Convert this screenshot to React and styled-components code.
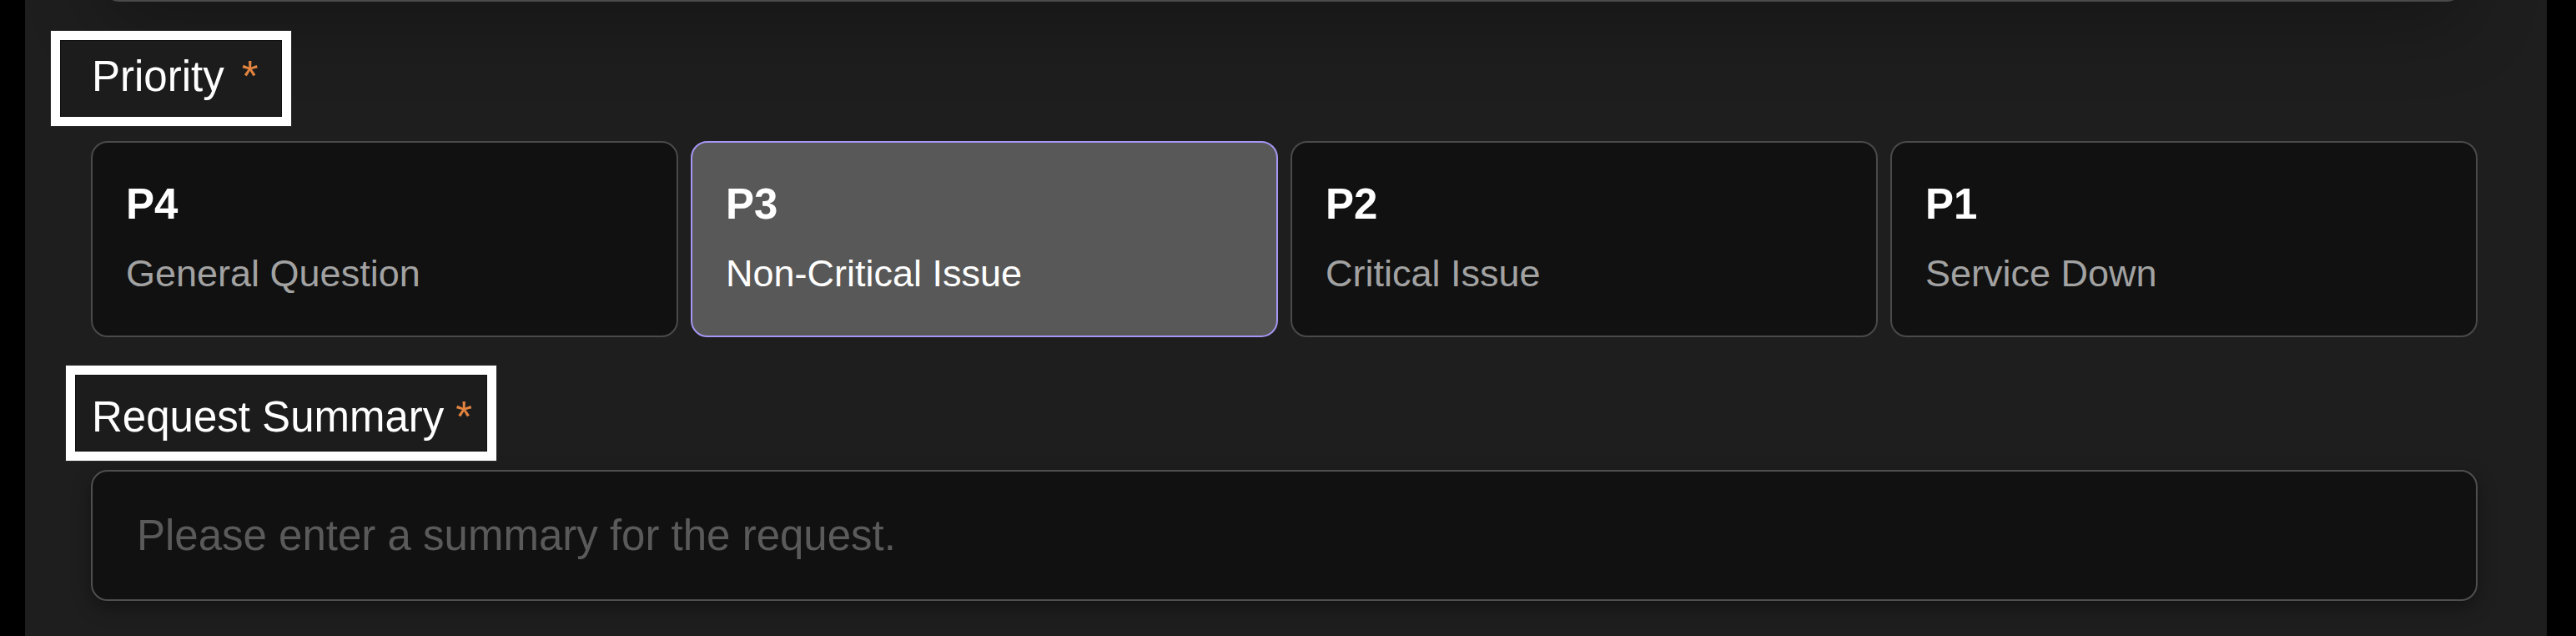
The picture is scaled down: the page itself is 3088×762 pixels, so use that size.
import React from "react";
import styled, { createGlobalStyle } from "styled-components";

const GlobalStyle = createGlobalStyle`
  html, body {
    margin: 0;
    padding: 0;
    background: #000;
  }
  body {
    font-family: "Liberation Sans", Arial, Helvetica, sans-serif;
    -webkit-font-smoothing: antialiased;
  }
  * { box-sizing: border-box; }
`;

const Page = styled.div`
  display: flex;
  height: 762px;
  overflow: hidden;
  background: #000;
  padding: 0 35px 0 30px;
`;

const Panel = styled.section`
  flex: 1;
  display: flex;
  flex-direction: column;
  align-items: flex-start;
  background: #1e1e1e;
  padding: 0 83px 0 31px;
`;

const TopField = styled.div`
  align-self: stretch;
  height: 120px;
  margin: -118px 17px 0 62px;
  background: #111;
  border: 2px solid #4a4a4a;
  border-radius: 20px;
  box-shadow: 0 24px 90px rgba(0, 0, 0, 0.28);
`;

const LabelMark = styled.label`
  display: flex;
  align-items: flex-start;
  margin-top: ${(p) => p.$mt}px;
  margin-left: ${(p) => p.$ml}px;
  padding: ${(p) => p.$pad};
  border: 11px solid #fff;
  background: #1c1c1c;
  box-shadow: inset 0 0 0 1px #101010, 0 0 0 1px #2a2a2a;
  color: #fff;
  font-size: 51px;
  line-height: 60px;
  white-space: nowrap;
`;

const Required = styled.span`
  color: #e2843f;
  margin-left: ${(p) => p.$gap}px;
`;

const CardGrid = styled.div`
  align-self: stretch;
  margin: 18px 0 0 48px;
  display: grid;
  grid-template-columns: repeat(4, 1fr);
  gap: 15px;
`;

const Card = styled.button`
  display: flex;
  flex-direction: column;
  align-items: flex-start;
  text-align: left;
  font-family: inherit;
  padding: 44px 40px 47px;
  border-radius: 20px;
  border: 2px solid ${(p) => (p.$selected ? "#a597f3" : "#4a4a4a")};
  background: ${(p) => (p.$selected ? "#585858" : "#111111")};
  cursor: pointer;
`;

const CardTitle = styled.span`
  font-size: 51px;
  line-height: 60px;
  font-weight: 700;
  color: #fff;
`;

const CardDesc = styled.span`
  margin-top: 26px;
  font-size: 45px;
  line-height: 54px;
  color: ${(p) => (p.$selected ? "#ffffff" : "#a2a2a2")};
`;

const InputWrap = styled.div`
  align-self: stretch;
  margin: 11px 0 0 48px;
`;

const SummaryInput = styled.input`
  display: block;
  width: 100%;
  height: 157px;
  padding: 0 53px;
  border: 2px solid #4f4f4f;
  border-radius: 20px;
  background: #111;
  color: #fff;
  font-family: "Liberation Sans", Arial, Helvetica, sans-serif;
  font-size: 51px;
  outline: none;
  box-shadow: 0 8px 22px rgba(0, 0, 0, 0.35);
  &::placeholder {
    color: #5a5a5a;
  }
`;

const priorities = [
  { id: "P4", label: "General Question" },
  { id: "P3", label: "Non-Critical Issue" },
  { id: "P2", label: "Critical Issue" },
  { id: "P1", label: "Service Down" },
];

export default function App() {
  const [selected, setSelected] = React.useState("P3");
  return (
    <>
      <GlobalStyle />
      <Page>
        <Panel>
          <TopField />
          <LabelMark $mt={35} $ml={0} $pad="14px 28px 18px 38px">
            Priority
            <Required $gap={21}>*</Required>
          </LabelMark>
          <CardGrid>
            {priorities.map((p) => (
              <Card
                key={p.id}
                type="button"
                $selected={selected === p.id}
                onClick={() => setSelected(p.id)}
              >
                <CardTitle>{p.id}</CardTitle>
                <CardDesc $selected={selected === p.id}>{p.label}</CardDesc>
              </Card>
            ))}
          </CardGrid>
          <LabelMark $mt={34} $ml={18} $pad="21px 18px 11px 20px">
            Request Summary
            <Required $gap={14}>*</Required>
          </LabelMark>
          <InputWrap>
            <SummaryInput placeholder="Please enter a summary for the request." />
          </InputWrap>
        </Panel>
      </Page>
    </>
  );
}
